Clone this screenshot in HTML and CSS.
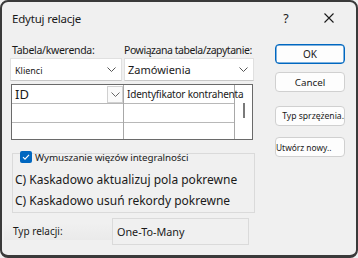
FILE: index.html
```html
<!DOCTYPE html>
<html lang="pl">
<head>
<meta charset="utf-8">
<link rel="stylesheet" href="styles.css">
</head>
<body>
<div class="dialog">
  <div class="titlebar">
    <span class="title">Edytuj relacje</span>
    <span class="help">?</span>
    <span class="close"><svg width="10" height="10" viewBox="0 0 10 10"><path d="M0.5 0.5L9.5 9.5M9.5 0.5L0.5 9.5" stroke="#1a1a1a" stroke-width="1.1" fill="none"/></svg></span>
  </div>
  <div class="content">
    <div class="main">
      <div class="labels">
        <span class="lbl lbl1">Tabela/kwerenda:</span>
        <span class="lbl lbl2">Powiązana tabela/zapytanie:</span>
      </div>
      <div class="combos">
        <div class="combo combo1"><span class="ctext small">Klienci</span><svg class="chev" width="9" height="5" viewBox="0 0 9 5"><path d="M0.5 0.5L4.5 4.5L8.5 0.5" stroke="#555" stroke-width="1" fill="none"/></svg></div>
        <div class="combo combo2"><span class="ctext">Zamówienia</span><svg class="chev" width="9" height="5" viewBox="0 0 9 5"><path d="M0.5 0.5L4.5 4.5L8.5 0.5" stroke="#555" stroke-width="1" fill="none"/></svg></div>
      </div>
      <div class="grid">
        <div class="cols">
          <div class="col c1">
            <div class="cell head"><span class="idtext">ID</span><span class="dd"><svg width="9" height="5" viewBox="0 0 9 5"><path d="M0.5 0.5L4.5 4.5L8.5 0.5" stroke="#666" stroke-width="1" fill="none"/></svg></span></div>
            <div class="cell"></div>
            <div class="cell last"></div>
          </div>
          <div class="scroll"><span class="thumb"></span></div>
          <div class="col c2">
            <div class="cell head"><span class="fktext">Identyfikator kontrahenta</span></div>
            <div class="cell"></div>
            <div class="cell last"></div>
          </div>
        </div>
      </div>
      <div class="group">
        <div class="chkrow">
          <span class="chk"><svg width="12" height="12" viewBox="0 0 12 12"><path d="M3 6.2L5 8.2L9 3.8" stroke="#fff" stroke-width="1.1" fill="none"/></svg></span>
          <span class="chklabel">Wymuszanie więzów integralności</span>
        </div>
        <div class="opt opt1">C) Kaskadowo aktualizuj pola pokrewne</div>
        <div class="opt opt2">C) Kaskadowo usuń rekordy pokrewne</div>
      </div>
      <div class="reltype">
        <span class="rlabel">Typ relacji:</span>
        <span class="rvalue">One-To-Many</span>
      </div>
    </div>
    <div class="buttons">
      <button class="btn ok">OK</button>
      <button class="btn cancel">Cancel</button>
      <button class="btn join">Typ sprzężenia.</button>
      <button class="btn create">Utwórz nowy..</button>
    </div>
  </div>
</div>
</body>
</html>
```
FILE: styles.css
```css
* { box-sizing: border-box; }
html, body { margin: 0; padding: 0; background: #f0f0f0; }
body { width: 358px; height: 258px; overflow: hidden; font-family: "Noto Sans", "Open Sans", sans-serif; color: #1a1a1a; }
.dialog {
  width: 358px; height: 258px;
  border: 2px solid #3a3a3a; border-bottom-width: 3px;
  border-radius: 8px;
  background: #f0f0f0;
  display: flex; flex-direction: column;
}
.titlebar { height: 32px; display: flex; align-items: center; padding-left: 10px; }
.title { font-size: 11.5px; letter-spacing: -0.2px; flex: 1; }
.help { font-size: 12.5px; width: 20px; margin-right: 28px; text-align: center; }
.close { width: 10px; height: 10px; margin-right: 22px; display: flex; }
.content { display: flex; padding-left: 8px; }
.main { width: 247px; display: flex; flex-direction: column; }
.labels { display: flex; height: 16px; margin-top: 8px; font-size: 10.5px; line-height: 16px; white-space: nowrap; }
.lbl1 { width: 114px; padding-left: 2px; letter-spacing: -0.3px; }
.lbl2 { letter-spacing: -0.45px; }
.combos { display: flex; gap: 2px; }
.combo { height: 23px; background: #fff; border: 1px solid #e0e0e0; border-bottom-color: #c8c8c8; display: flex; align-items: center; }
.combo1 { width: 112px; padding-left: 4px; }
.combo2 { width: 130px; padding-left: 3px; }
.ctext { font-size: 11px; flex: 1; white-space: nowrap; }
.ctext.small { font-size: 9px; padding-top: 2px; }
.chev { margin-right: 5px; }
.grid { margin-top: 3px; margin-left: 1px; width: 242px; height: 56px; border: 1px solid #6a6a6a; background: #fff; }
.cols { display: flex; height: 100%; }
.col { display: flex; flex-direction: column; }
.c1 { width: 112px; border-right: 1px solid #a8a8a8; }
.c2 { width: 111px; border-right: 1px solid #a8a8a8; order: 2; }
.cell { height: 19px; border-bottom: 1px solid #b8b8b8; display: flex; align-items: center; }
.cell.last { border-bottom: none; flex: 1; }
.idtext { font-size: 13px; padding-left: 3px; flex: 1; }
.dd { width: 16px; height: 17px; border: 1px solid #d0d0d0; background: #fafafa; display: flex; align-items: center; justify-content: center; }
.fktext { font-size: 10px; letter-spacing: -0.2px; padding-left: 3px; white-space: nowrap; }
.scroll { flex: 1; position: relative; order: 3; }
.thumb { position: absolute; left: 8px; top: 18px; width: 2px; height: 15px; background: #7a7a7a; }
.group { margin-top: 13px; margin-left: 2px; width: 243px; height: 60px; border: 1px solid #dadada; }
.chkrow { display: flex; align-items: center; margin-top: -4px; margin-left: 7px; height: 13px; }
.chk { width: 12px; height: 12px; background: #0067c0; border-radius: 2px; display: flex; }
.chklabel { font-size: 9.8px; letter-spacing: -0.1px; margin-left: 3px; padding-top: 2px; white-space: nowrap; }
.opt { font-size: 12px; padding-left: 2px; height: 21px; line-height: 21px; white-space: nowrap; }
.opt1 { margin-top: 6px; }
.reltype { display: flex; align-items: center; margin-top: 5px; height: 27px; }
.rlabel { width: 108px; font-size: 10px; margin-left: -6px; padding-left: 9px; background: linear-gradient(#f0f0f0, #eaeaea); height: 17px; line-height: 17px; }
.rvalue { width: 137px; height: 27px; border: 1px solid #dadada; font-size: 10.8px; line-height: 25px; padding-left: 4px; white-space: nowrap; }
.buttons { display: flex; flex-direction: column; margin-left: 18px; padding-top: 10px; }
.btn { width: 70px; height: 20px; background: #fdfdfd; border: 1px solid #d0d0d0; border-radius: 4px; font-family: inherit; font-size: 10px; color: #1a1a1a; padding: 0; white-space: nowrap; }
.ok { border: 1px solid #0067c0; box-shadow: inset 0 0 0 0.5px #0067c0; }
.cancel { margin-top: 8px; font-size: 9.8px; }
.join { margin-top: 14px; font-size: 8.6px; text-align: right; padding-right: 0; overflow: visible; }
.create { margin-top: 11px; font-size: 8.4px; text-align: left; padding-left: 0; }
```
